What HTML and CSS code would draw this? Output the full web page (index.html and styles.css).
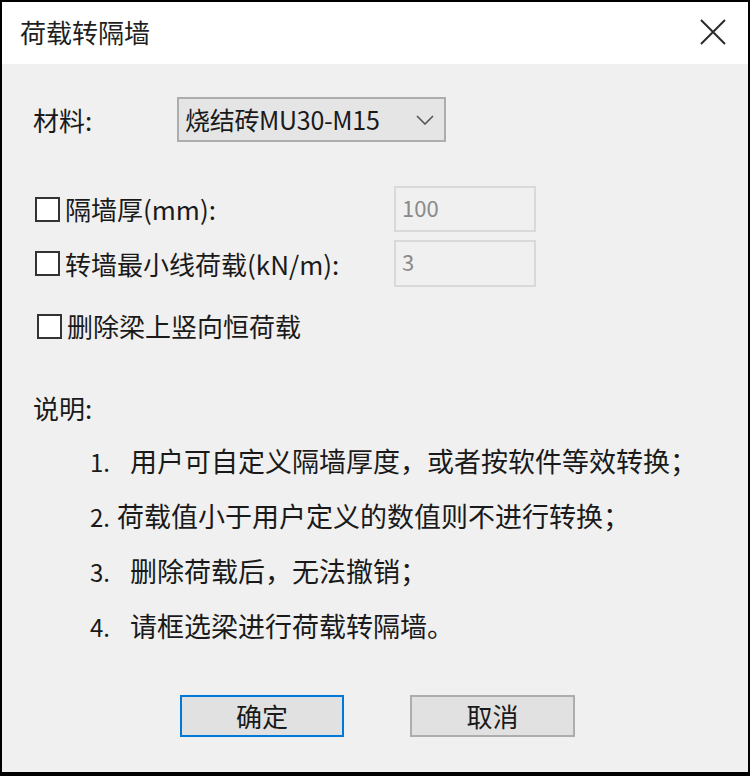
FILE: index.html
```html
<!DOCTYPE html>
<html lang="zh-CN">
<head>
    <meta charset="UTF-8">
    <meta name="viewport" content="width=device-width, initial-scale=1.0">
    <title>荷载转隔墙</title>
    <link rel="stylesheet" href="styles.css">
</head>
<body>
    <div class="dialog">
        <div class="title-bar">
            <span class="title">荷载转隔墙</span>
            <svg class="close" width="26" height="26" viewBox="0 0 26 26">
                <path d="M1 1 L25 25 M25 1 L1 25" stroke="#2b2b2b" stroke-width="2" fill="none"/>
            </svg>
        </div>

        <div class="content">
            <div class="material-row">
                <span class="label">材料:</span>
                <div class="combo">
                    <span class="combo-text">烧结砖MU30-M15</span>
                    <svg class="chevron" width="18" height="10" viewBox="0 0 18 10">
                        <polyline points="1,1 9,9 17,1" stroke="#555" stroke-width="1.6" fill="none"/>
                    </svg>
                </div>
            </div>

            <div class="check-row first">
                <span class="checkbox"></span>
                <span class="check-label">隔墙厚(mm):</span>
                <div class="field">100</div>
            </div>
            <div class="check-row second">
                <span class="checkbox"></span>
                <span class="check-label">转墙最小线荷载(kN/m):</span>
                <div class="field">3</div>
            </div>
            <div class="check-row third">
                <span class="checkbox"></span>
                <span class="check-label">删除梁上竖向恒荷载</span>
            </div>

            <div class="notes-title">说明:</div>
            <ol class="notes">
                <li><span class="num">1.</span>用户可自定义隔墙厚度，或者按软件等效转换；</li>
                <li><span class="num tight">2.</span>荷载值小于用户定义的数值则不进行转换；</li>
                <li><span class="num">3.</span>删除荷载后，无法撤销；</li>
                <li><span class="num">4.</span>请框选梁进行荷载转隔墙。</li>
            </ol>

            <div class="buttons">
                <button class="btn primary">确定</button>
                <button class="btn">取消</button>
            </div>
        </div>
    </div>
</body>
</html>
```

FILE: styles.css
```css
* {
    margin: 0;
    padding: 0;
    box-sizing: border-box;
}

body {
    width: 750px;
    height: 776px;
    background: #000;
    font-family: "Noto Sans CJK SC", "Noto Sans", sans-serif;
    color: #1a1a1a;
    overflow: hidden;
}

.dialog {
    width: 750px;
    height: 776px;
    border: 2px solid #000;
    border-bottom-width: 4px;
    background: #f0f0f0;
    display: flex;
    flex-direction: column;
}

.title-bar {
    height: 62px;
    background: #fff;
    display: flex;
    align-items: center;
    justify-content: space-between;
    padding: 0 22px 2px 18px;
}

.title {
    font-size: 26px;
    line-height: 1;
    color: #1f1f1f;
}

.close {
    display: block;
}

.content {
    padding: 33px 0 0 31px;
    display: flex;
    flex-direction: column;
}

.label,
.check-label,
.notes-title {
    font-size: 26px;
    line-height: 30px;
}

.material-row {
    display: flex;
    align-items: center;
    height: 45px;
}

.material-row .label {
    width: 144px;
}

.combo {
    width: 269px;
    height: 45px;
    background: #e5e5e5;
    border: 2px solid #adadad;
    display: flex;
    align-items: center;
    justify-content: space-between;
    padding: 0 10px 0 6px;
}

.combo-text {
    font-size: 25px;
    line-height: 1;
    letter-spacing: -0.3px;
    color: #1a1a1a;
}

.chevron {
    display: block;
}

.check-row {
    display: flex;
    align-items: center;
}

.check-row.first {
    margin-top: 44px;
    height: 46px;
}

.check-row.second {
    margin-top: 8px;
    height: 47px;
}

.check-row.third {
    margin-top: 24px;
    height: 30px;
}

.checkbox {
    width: 25px;
    height: 25px;
    border: 2px solid #333;
    background: #fff;
    margin-left: 2px;
    margin-right: 5px;
    flex-shrink: 0;
}

.third .checkbox {
    margin-left: 4px;
}

.check-label {
    width: 329px;
}

.third .check-label {
    width: auto;
}

.field {
    width: 142px;
    height: 100%;
    border: 2px solid #d9d9d9;
    background: #f0f0f0;
    color: #8a8a8a;
    font-size: 22px;
    line-height: 1;
    padding: 8px 6px;
}

.notes-title {
    margin-top: 52px;
}

.notes {
    list-style: none;
    margin-top: 10px;
    padding-left: 57px;
}

.notes li {
    font-size: 27px;
    line-height: 55px;
    height: 55px;
    white-space: nowrap;
    color: #1a1a1a;
}

.num {
    display: inline-block;
    width: 40px;
    font-size: 24px;
}

.num.tight {
    width: 27px;
}

.buttons {
    margin-top: 42px;
    display: flex;
    gap: 66px;
    padding-left: 147px;
}

.btn {
    width: 165px;
    height: 42px;
    font-family: inherit;
    font-size: 26px;
    line-height: 1;
    color: #1a1a1a;
    background: #e1e1e1;
    border: 2px solid #adadad;
}

.btn.primary {
    width: 164px;
    border: 2px solid #0078d7;
}
```
